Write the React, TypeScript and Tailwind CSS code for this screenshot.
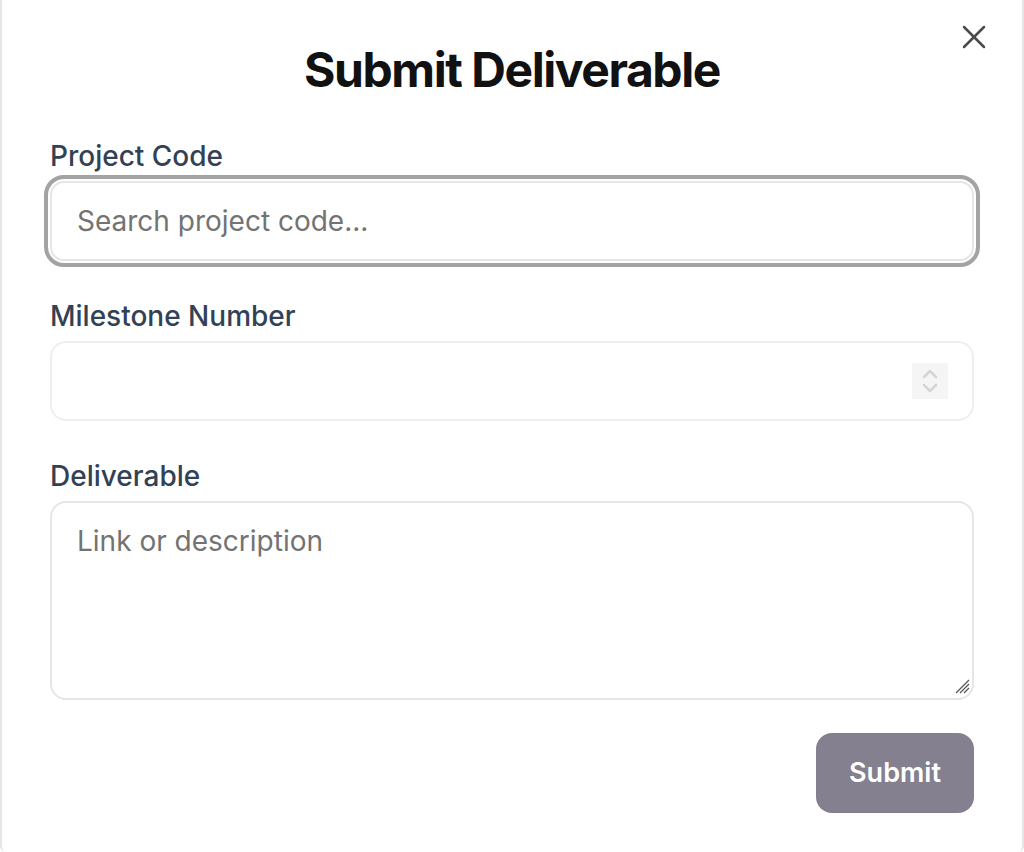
import { X } from "lucide-react";

export default function App() {
  return (
    <div
      className="relative min-h-[852px] w-full bg-white border-x-2 border-[#e6e6e6] rounded-b-[6px]"
      style={{ fontFamily: "Inter, 'Noto Sans', sans-serif" }}
    >
      {/* Close button */}
      <button className="absolute right-[28px] top-[17px] text-[#4b4b4b]" aria-label="Close">
        <X className="h-[40px] w-[40px]" strokeWidth={1.5} />
      </button>

      <div className="px-[48px] pt-[42px]">
        <h2 className="text-center text-[48px] leading-[56px] font-bold tracking-[-0.03em] text-[#111111]">
          Submit Deliverable
        </h2>

        <form className="mt-[42px] flex flex-col">
          <label className="text-[28px] leading-[32px] font-medium text-[#334155] mb-[9px]">
            Project Code
          </label>
          <input
            type="text"
            placeholder="Search project code..."
            className="h-[80px] w-full rounded-[14px] border-2 border-[#e6e6e6] px-[25px] text-[28px] text-[#111] placeholder:text-[#737373] outline-[4px] outline-solid outline-[#a3a3a3] outline-offset-[2px]"
          />

          <label className="mt-[39px] text-[28px] leading-[32px] font-medium text-[#334155] mb-[9px]">
            Milestone Number
          </label>
          <div className="relative h-[80px] w-full rounded-[16px] border-2 border-[#eeeeee]">
            <div className="absolute right-[24px] top-[20px] flex h-[36px] w-[36px] flex-col items-center justify-center bg-[#f5f5f5]">
              <svg width="18" height="28" viewBox="0 0 18 28" fill="none" stroke="#d4d4d4" strokeWidth="2.5" strokeLinecap="round" strokeLinejoin="round">
                <path d="M3 10 L9 4 L15 10" />
                <path d="M3 18 L9 24 L15 18" />
              </svg>
            </div>
          </div>

          <label className="mt-[39px] text-[28px] leading-[32px] font-medium text-[#334155] mb-[9px]">
            Deliverable
          </label>
          <div className="relative">
            <textarea
              placeholder="Link or description"
              className="block h-[199px] w-full resize-none rounded-[16px] border-2 border-[#e6e6e6] px-[25px] pt-[20px] text-[28px] leading-[36px] text-[#111] placeholder:text-[#737373] outline-none"
            />
            <svg className="absolute right-[4px] bottom-[6px]" width="18" height="18" viewBox="0 0 18 18" stroke="#555" strokeWidth="1.3">
              <path d="M4 17 L17 4" />
              <path d="M8 17 L17 8" />
              <path d="M12 17 L17 12" />
            </svg>
          </div>

          <div className="mt-[33px] flex justify-end">
            <button
              type="button"
              className="h-[80px] w-[158px] rounded-[16px] bg-[#858090] text-[27px] font-semibold text-white"
            >
              Submit
            </button>
          </div>
        </form>
      </div>
    </div>
  );
}
